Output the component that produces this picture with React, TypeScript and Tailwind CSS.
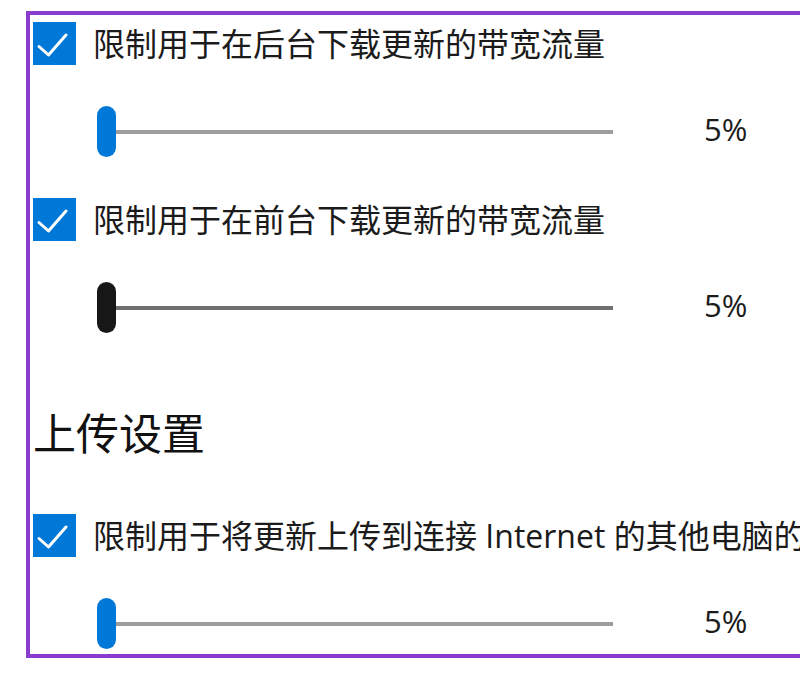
const font = { fontFamily: '"Open Sans", "Noto Sans CJK SC", sans-serif' };

function CheckRow({ label }: { label: string }) {
  return (
    <div className="flex h-[43px] items-center gap-[17px] whitespace-nowrap">
      <div className="h-[43px] w-[43px] shrink-0 bg-[#0078d7]">
        <svg viewBox="0 0 43 43" className="h-[43px] w-[43px]">
          <path d="M6 24.5 L15.5 33 L33 13" fill="none" stroke="#fff" strokeWidth="3" strokeLinecap="round" strokeLinejoin="round" />
        </svg>
      </div>
      <span className="text-[32px] leading-none text-[#1b1b1b]">{label}</span>
    </div>
  );
}

function SliderRow({ active }: { active?: boolean }) {
  return (
    <div className="mt-[41px] flex h-[51px] items-center pl-[64px]">
      <div className="relative flex h-[51px] w-[516px] items-center">
        <div className={`h-[4px] w-full ${active ? 'bg-[#6f6f6f]' : 'bg-[#9d9d9d]'}`} />
        <div
          className={`absolute left-0 top-0 h-[51px] w-[19px] rounded-full ${
            active ? 'bg-[#171717]' : 'bg-[#0078d7]'
          }`}
        />
      </div>
      <span className="mb-[5px] ml-[91px] text-[31px] leading-none text-[#1b1b1b]">5%</span>
    </div>
  );
}

export default function App() {
  return (
    <div className="h-[673px] w-[800px] overflow-hidden bg-white" style={font}>
      <div className="ml-[26px] mt-[11px] h-[647px] w-[900px] border-4 border-[#8a3ccf] pl-[3px] pt-[7px]">
        <CheckRow label="限制用于在后台下载更新的带宽流量" />
        <SliderRow />
        <div className="mt-[41px]">
          <CheckRow label="限制用于在前台下载更新的带宽流量" />
        </div>
        <SliderRow active />
        <div className="mt-[70px] flex h-[60px] items-center text-[43px] leading-none text-[#111]">上传设置</div>
        <div className="mt-[51px]">
          <CheckRow label="限制用于将更新上传到连接 Internet 的其他电脑的带宽" />
        </div>
        <SliderRow />
      </div>
    </div>
  );
}
